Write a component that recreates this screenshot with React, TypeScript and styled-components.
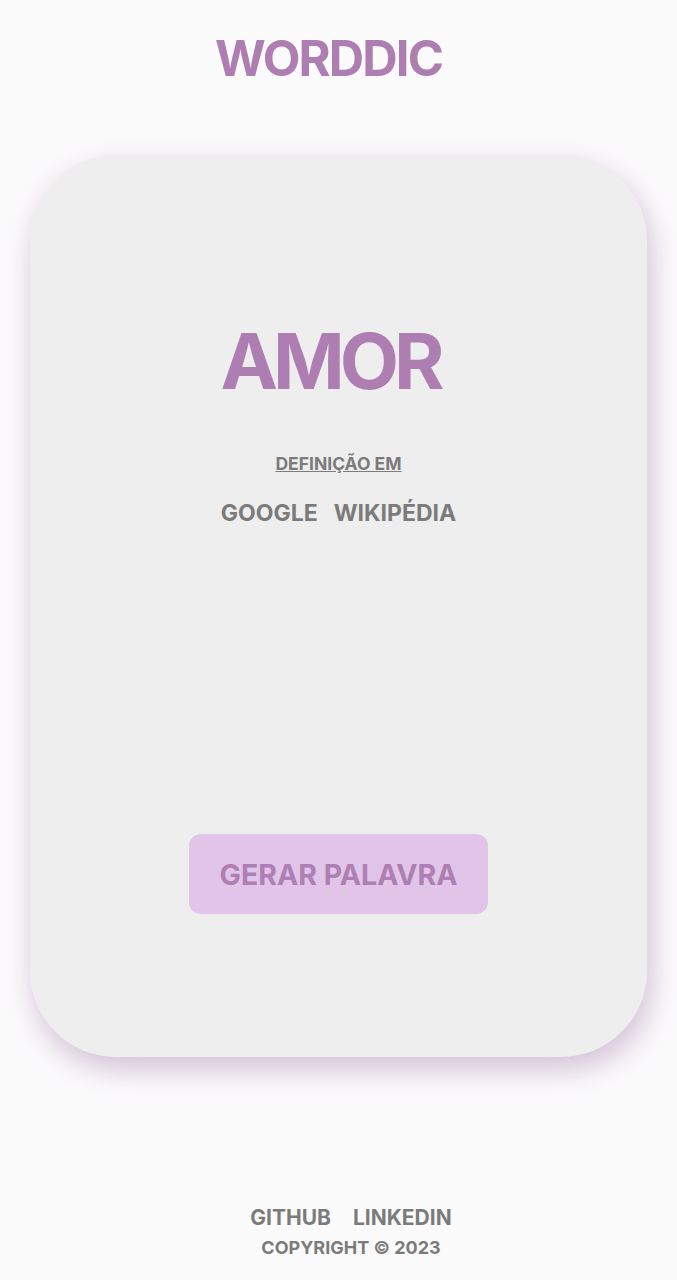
import React from "react";
import styled, { createGlobalStyle } from "styled-components";

const GlobalStyle = createGlobalStyle`
  * { box-sizing: border-box; }
  body {
    margin: 0;
    background: #fcfbfc;
    font-family: Inter, "Noto Sans", sans-serif;
  }
`;

const App = () => {
  return (
    <>
      <GlobalStyle />
      <Page>
        <Header>
          <Logo>WORDDIC</Logo>
        </Header>
        <Card>
          <Word>AMOR</Word>
          <DefinitionLabel>DEFINIÇÃO EM</DefinitionLabel>
          <Links>
            <LinkText>GOOGLE</LinkText>
            <LinkText>WIKIPÉDIA</LinkText>
          </Links>
          <GenerateButton>GERAR PALAVRA</GenerateButton>
        </Card>
        <Footer>
          <FooterLinks>
            <FooterLink>GITHUB</FooterLink>
            <FooterLink>LINKEDIN</FooterLink>
          </FooterLinks>
          <Copyright>COPYRIGHT © 2023</Copyright>
        </Footer>
      </Page>
    </>
  );
};

export default App;

const Page = styled.div`
  min-height: 1280px;
  display: flex;
  flex-direction: column;
  align-items: stretch;
`;

const Header = styled.header`
  height: 155px;
  display: flex;
  justify-content: center;
  padding: 29px 20px 0 0;
`;

const Logo = styled.h1`
  margin: 0;
  font-size: 49px;
  font-weight: 700;
  line-height: 60px;
  letter-spacing: -1.9px;
  color: #ae7eb3;
`;

const Card = styled.main`
  margin: 0 30px;
  height: 902px;
  background: #efeeef;
  border-radius: 86px;
  box-shadow: 4px 12px 30px rgba(150, 110, 160, 0.42);
  display: flex;
  flex-direction: column;
  align-items: center;
  padding-top: 160px;
`;

const Word = styled.h2`
  margin: 0 17px 0 0;
  font-size: 77px;
  font-weight: 700;
  line-height: 92px;
  letter-spacing: -5px;
  color: #ae7eb3;
`;

const DefinitionLabel = styled.span`
  margin-top: 46px;
  font-size: 17.5px;
  font-weight: 700;
  line-height: 22px;
  color: #7b7b7b;
  text-decoration: underline;
`;

const Links = styled.div`
  margin-top: 24px;
  display: flex;
  gap: 16px;
`;

const LinkText = styled.span`
  font-size: 23px;
  font-weight: 700;
  line-height: 28px;
  color: #7b7b7b;
`;

const GenerateButton = styled.button`
  margin-top: 307px;
  width: 299px;
  height: 80px;
  border: none;
  border-radius: 12px;
  background: #e1c4e8;
  color: #ad7fb3;
  font-family: Inter, "Noto Sans", sans-serif;
  font-size: 28.5px;
  font-weight: 700;
  cursor: pointer;
`;

const Footer = styled.footer`
  margin-top: auto;
  padding: 0 0 20px 25px;
  display: flex;
  flex-direction: column;
  align-items: center;
  gap: 4px;
`;

const FooterLinks = styled.div`
  display: flex;
  gap: 22px;
`;

const FooterLink = styled.span`
  font-size: 21px;
  font-weight: 700;
  line-height: 28px;
  color: #7b7b7b;
`;

const Copyright = styled.span`
  font-size: 18px;
  font-weight: 700;
  line-height: 24px;
  color: #7b7b7b;
`;
